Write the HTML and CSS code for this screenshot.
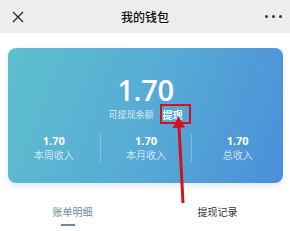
FILE: index.html
```html
<!DOCTYPE html>
<html lang="zh">
<head>
<meta charset="utf-8">
<link rel="stylesheet" href="styles.css">
</head>
<body>
<div class="page">
  <header class="topbar">
    <svg class="close" width="12" height="12" viewBox="0 0 12 12"><path d="M1 1L11 11M11 1L1 11" stroke="#222" stroke-width="1.2" fill="none"/></svg>
    <div class="title">我的钱包</div>
    <div class="more"><i></i><i></i><i></i></div>
  </header>
  <section class="card">
    <div class="balance">1.70</div>
    <div class="label-row"><span class="label">可提现余额</span><span class="withdraw">提现</span></div>
    <div class="stats">
      <div class="stat"><div class="val">1.70</div><div class="cap">本周收入</div></div>
      <div class="stat"><div class="val">1.70</div><div class="cap">本月收入</div></div>
      <div class="stat"><div class="val">1.70</div><div class="cap">总收入</div></div>
    </div>
  </section>
  <nav class="tabs">
    <div class="tab active">账单明细</div>
    <div class="tab">提现记录</div>
  </nav>
  <svg class="annot" width="290" height="231" viewBox="0 0 290 231">
    <rect x="161" y="105" width="29" height="18" fill="none" stroke="#d4121c" stroke-width="2"/>
    <path d="M183 203L179 126" stroke="#d4121c" stroke-width="3" fill="none"/>
    <path d="M178.5 116L172.5 128L185 127.5Z" fill="#d4121c"/>
  </svg>
</div>
</body>
</html>
```
FILE: styles.css
```css
* { box-sizing: border-box; margin: 0; padding: 0; }
html, body { width: 290px; height: 231px; overflow: hidden; background: #fff; }
body { font-family: "Noto Sans", "Noto Sans CJK SC", sans-serif; }
.page { position: relative; width: 290px; height: 231px; }
.topbar { height: 33px; background: #ededed; display: flex; align-items: center; justify-content: space-between; padding: 0 5px 0 12px; }
.close { display: block; }
.title { font-family: "Noto Sans CJK SC", sans-serif; font-size: 12px; font-weight: 500; color: #111; position: absolute; left: 0; right: 0; text-align: center; top: 8px; line-height: 18px; pointer-events: none; }
.more { display: flex; gap: 4px; padding-right: 3px; }
.more i { display: block; width: 3px; height: 3px; background: #333; border-radius: 50%; }
.card { margin: 15px 7px 0 8px; height: 135px; border-radius: 8px; background: linear-gradient(110deg, #5dbfcd 0%, #56a9d6 55%, #4a8ed9 100%); box-shadow: 0 3px 6px rgba(90, 140, 190, 0.18); color: #fff; display: flex; flex-direction: column; align-items: center; padding-top: 27px; }
.balance { font-family: "Open Sans", sans-serif; font-size: 29px; font-weight: 600; line-height: 30px; letter-spacing: -0.3px; }
.label-row { display: flex; align-items: center; gap: 9px; margin-top: 2px; height: 16px; }
.label { font-family: "Noto Sans CJK SC", sans-serif; font-size: 9px; line-height: 14px; color: rgba(255,255,255,0.78); }
.withdraw { font-family: "Noto Sans CJK SC", sans-serif; font-size: 10px; line-height: 14px; font-weight: 700; color: #fff; }
.stats { display: grid; grid-template-columns: repeat(3, 1fr); width: 100%; margin-top: 11px; }
.stat { display: flex; flex-direction: column; align-items: center; border-left: 1px solid rgba(255,255,255,0.28); height: 28px; justify-content: center; }
.stat:first-child { border-left: none; }
.val { font-family: "Open Sans", sans-serif; font-size: 11px; font-weight: 700; line-height: 13px; }
.cap { font-family: "Noto Sans CJK SC", sans-serif; font-size: 10px; line-height: 15px; color: rgba(255,255,255,0.72); }
.tabs { display: grid; grid-template-columns: 1fr 1fr; margin-top: 22px; }
.tab { font-family: "Noto Sans CJK SC", sans-serif; font-size: 10px; color: #333; text-align: center; line-height: 14px; position: relative; height: 21px; }
.tab.active { color: #6d8aa0; }
.tab.active::after { content: ""; position: absolute; left: 61px; width: 14px; bottom: 0; height: 2px; background: #6d8aa0; }
.annot { position: absolute; left: 0; top: 0; pointer-events: none; }
```
